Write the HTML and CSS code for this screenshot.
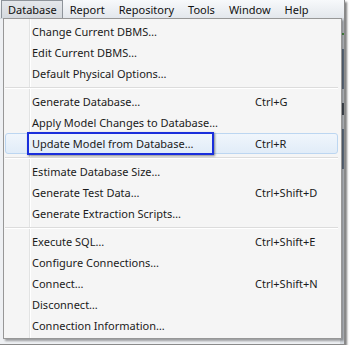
FILE: index.html
```html
<!DOCTYPE html>
<html lang="en">
<head>
  <meta charset="UTF-8">
  <meta name="viewport" content="width=device-width, initial-scale=1.0">
  <title>Database Menu</title>
  <link rel="stylesheet" href="styles.css">
</head>
<body>

<div class="shot">
  <!-- Menu bar -->
  <div class="menubar">
    <span class="menubar-item active">Database</span>
    <span class="menubar-item">Report</span>
    <span class="menubar-item">Repository</span>
    <span class="menubar-item">Tools</span>
    <span class="menubar-item">Window</span>
    <span class="menubar-item">Help</span>
  </div>

  <!-- Application behind the menu -->
  <div class="app">
    <div class="app-strip">
      <span class="strip-mark green"></span>
      <span class="strip-mark tall"></span>
      <span class="strip-mark"></span>
      <span class="strip-mark tall"></span>
    </div>
  </div>

  <!-- Dropdown -->
  <div class="menu">
    <div class="menu-item"><span>Change Current DBMS…</span></div>
    <div class="menu-item"><span>Edit Current DBMS…</span></div>
    <div class="menu-item"><span>Default Physical Options…</span></div>
    <div class="menu-sep"></div>
    <div class="menu-item"><span>Generate Database…</span><span>Ctrl+G</span></div>
    <div class="menu-item"><span>Apply Model Changes to Database…</span></div>
    <div class="menu-item hover">
      <span>Update Model from Database…</span><span>Ctrl+R</span>
      <div class="callout"></div>
    </div>
    <div class="menu-sep"></div>
    <div class="menu-item"><span>Estimate Database Size…</span></div>
    <div class="menu-item"><span>Generate Test Data…</span><span>Ctrl+Shift+D</span></div>
    <div class="menu-item"><span>Generate Extraction Scripts…</span></div>
    <div class="menu-sep"></div>
    <div class="menu-item"><span>Execute SQL…</span><span>Ctrl+Shift+E</span></div>
    <div class="menu-item"><span>Configure Connections…</span></div>
    <div class="menu-item"><span>Connect…</span><span>Ctrl+Shift+N</span></div>
    <div class="menu-item"><span>Disconnect…</span></div>
    <div class="menu-item"><span>Connection Information…</span></div>
  </div>
</div>

</body>
</html>
```

FILE: styles.css
```css
body {
  margin: 0;
  padding: 0;
  background: #ffffff;
  font-family: "Noto Sans", "Open Sans", sans-serif;
  font-size: 11px;
  color: #1b1b1b;
}

.shot {
  position: relative;
  width: 344px;
  height: 344px;
  overflow: hidden;
  background: #eef0f3;
  border-right: 1px solid #8a8a8a;
  border-bottom: 1px solid #8a8a8a;
  box-shadow: 2px 2px 2px rgba(0, 0, 0, 0.5);
  display: flex;
  flex-direction: column;
}

/* Menu bar */
.menubar {
  height: 18px;
  display: flex;
  align-items: stretch;
  padding-left: 1px;
  background: linear-gradient(#f7f9fb, #e3e7ec);
  border-bottom: 1px solid #d4d8dd;
}

.menubar-item {
  display: flex;
  align-items: center;
  padding: 0 6px;
  color: #111;
  border: 1px solid transparent;
}

.menubar-item.active {
  padding: 0 5px 0 6px;
  background: linear-gradient(#e4e7eb, #d5d9de);
  border-color: #8e949b;
  border-bottom: none;
}

/* Application behind */
.app {
  flex: 1;
  display: flex;
  justify-content: flex-end;
}

.app-strip {
  width: 4px;
  background: #d6dbe1;
  display: flex;
  flex-direction: column;
  gap: 14px;
  padding-top: 14px;
}

.strip-mark {
  height: 12px;
  background: #4d5560;
}

.strip-mark.tall {
  height: 40px;
  background: #6f8096;
}

.strip-mark.green {
  height: 2px;
  background: #52a04c;
}

/* Dropdown */
.menu {
  position: absolute;
  left: 3px;
  top: 18px;
  width: 337px;
  padding: 2px 0;
  background:
    linear-gradient(to right, transparent 25px, #e2e3e3 25px, #e2e3e3 26px, #ffffff 26px, #ffffff 27px, transparent 27px),
    #f5f5f5;
  border: 1px solid #979797;
  box-shadow: 2px 2px 2px rgba(0, 0, 0, 0.35);
}

.menu-item {
  position: relative;
  height: 21px;
  margin: 0 3px 0 1px;
  padding-left: 27px;
  display: grid;
  grid-template-columns: 223px auto;
  align-items: center;
  white-space: nowrap;
  box-sizing: border-box;
}

.menu-item.hover {
  background: linear-gradient(#f0f6fc, #e1ecf8);
  border: 1px solid #bcd6f1;
  border-radius: 3px;
  padding-left: 26px;
}

.callout {
  position: absolute;
  left: 21px;
  top: -2px;
  width: 183px;
  height: 19px;
  border: 2px solid #1a2fdc;
  box-shadow: 1px 1px 2px rgba(0, 0, 0, 0.45);
}

.menu-sep {
  height: 7px;
  margin: 0 3px 0 1px;
  background: linear-gradient(transparent 3px, #dcdcdc 3px, #dcdcdc 4px, #ffffff 4px, #ffffff 5px, transparent 5px);
}
```
